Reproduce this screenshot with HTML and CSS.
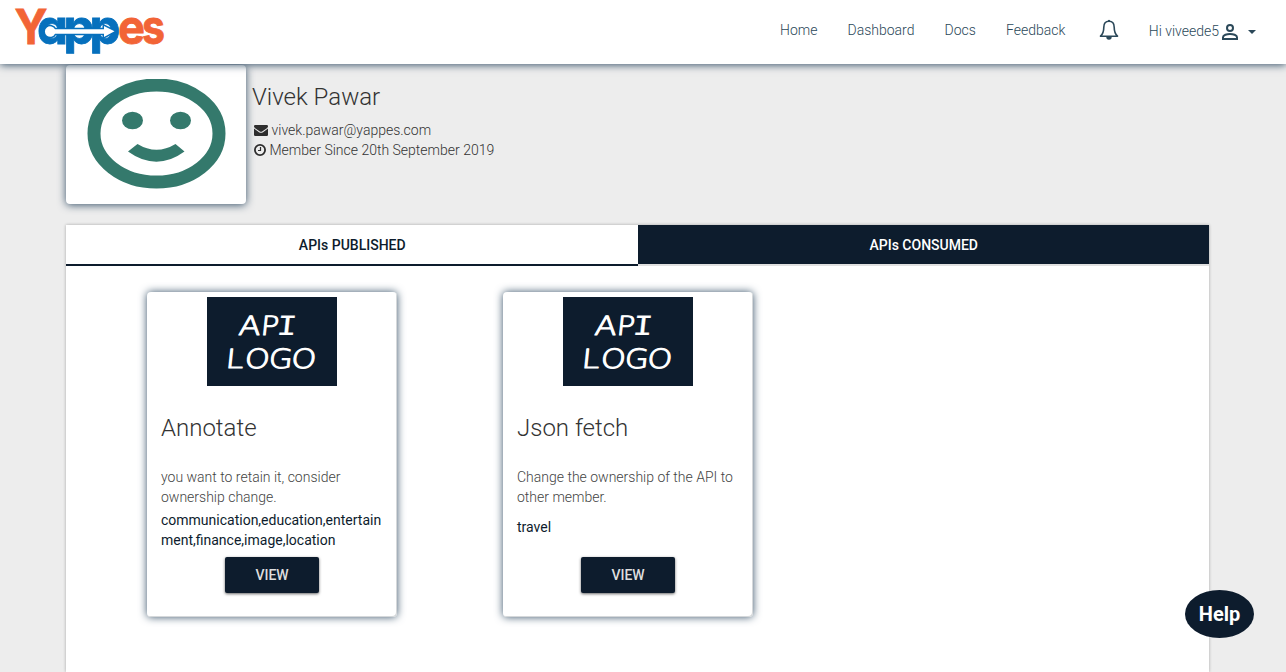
FILE: index.html
```html
<!DOCTYPE html>
<html lang="en">
<head>
<meta charset="utf-8">
<title>Yappes</title>
<link rel="stylesheet" href="styles.css">
</head>
<body>
<header class="navbar">
  <svg class="logo" viewBox="0 0 170 60" width="170" height="60" role="img" aria-label="Yappes">
    <g class="logo-orange">
      <text x="14.500" y="43.700" textLength="33" lengthAdjust="spacingAndGlyphs">Y</text>
      <text x="118" y="43.700" textLength="27" lengthAdjust="spacingAndGlyphs">e</text>
      <text x="142" y="43.700" textLength="23" lengthAdjust="spacingAndGlyphs">s</text>
    </g>
    <g class="logo-blue">
      <text x="37" y="43.700" textLength="31" lengthAdjust="spacingAndGlyphs">a</text>
      <text x="63.500" y="43.700" textLength="31" lengthAdjust="spacingAndGlyphs">p</text>
      <text x="89.500" y="43.700" textLength="31" lengthAdjust="spacingAndGlyphs">p</text>
    </g>
    <path class="logo-arrow" d="M55 29.300H104V26L114.500 31.300L104 37V33.800H55A5.300 5.300 0 1 1 55 29.300Z"/>
  </svg>
  <nav class="nav">
    <a class="nav-link">Home</a>
    <a class="nav-link">Dashboard</a>
    <a class="nav-link">Docs</a>
    <a class="nav-link">Feedback</a>
    <svg class="bell" viewBox="0 0 20 22" width="20" height="22">
      <path class="line" d="M10 2.200C6.500 2.200 4.800 4.800 4.800 8.200C4.800 12.500 4.300 14.700 1.500 17.200H18.500C15.700 14.700 15.200 12.500 15.200 8.200C15.200 4.800 13.500 2.200 10 2.200Z"/>
      <path class="solid" d="M8.700 2.200a1.300 1.500 0 0 1 2.600 0ZM7.300 18h5.400a2.700 2.700 0 0 1-5.400 0Z"/>
    </svg>
    <a class="user">Hi viveede5
      <svg class="person" viewBox="0 0 16 16" width="16" height="16"><circle class="heavy" cx="8" cy="4" r="3"/><path class="heavy" d="M1 15V13.200C1 11 5 9.900 8 9.900S15 11 15 13.200V15Z"/></svg>
      <svg class="caret" viewBox="0 0 8 4" width="8" height="4"><path class="solid" d="M0 0H8L4 4Z"/></svg>
    </a>
  </nav>
</header>
<main class="page">
  <section class="profile">
    <div class="avatar">
      <svg viewBox="0 0 140 110" width="140" height="110">
        <ellipse class="face" cx="70.500" cy="54.500" rx="62.500" ry="48.500"/>
        <ellipse class="feature" cx="46.500" cy="41.500" rx="10.500" ry="8.700"/>
        <ellipse class="feature" cx="94.500" cy="41.500" rx="10.500" ry="8.700"/>
        <path class="feature" d="M51.500 65Q70.500 76.500 89.500 65L98.500 72.500Q70.500 93 42 72.500Z"/>
      </svg>
    </div>
    <div class="about">
      <h1 class="title">Vivek Pawar</h1>
      <p class="fact"><svg viewBox="0 0 14 11" width="14" height="11"><path d="M1.200 0H12.800A1.200 1.200 0 0 1 14 1.300C14 2.300 13.200 3 12.500 3.500L8.500 6.300Q7 7.300 5.500 6.300L1.500 3.500C.8 3 0 2.300 0 1.300A1.200 1.200 0 0 1 1.200 0ZM0 3.500L5 7.200Q7 8.500 9 7.200L14 3.500V9.800A1.200 1.200 0 0 1 12.800 11H1.200A1.200 1.200 0 0 1 0 9.800Z"/></svg><span>vivek.pawar@yappes.com</span></p>
      <p class="fact"><svg viewBox="0 0 12 12" width="12" height="12"><circle class="clock" cx="6" cy="6" r="5.100"/><path class="hand" d="M6.500 3V6.500H4"/></svg><span>Member Since 20th September 2019</span></p>
    </div>
  </section>
  <section class="panel">
    <div class="tabs">
      <div class="tab tab-active">APIs PUBLISHED</div>
      <div class="tab">APIs CONSUMED</div>
    </div>
    <div class="cards">
      <article class="card">
        <svg class="api-logo" viewBox="0 0 130 89" width="130" height="89">
          <g transform="translate(0 38) skewX(-6)"><text x="31" textLength="22" lengthAdjust="spacingAndGlyphs">A</text><text x="53" textLength="18" lengthAdjust="spacingAndGlyphs">P</text><text class="serif-i" x="69" textLength="20" lengthAdjust="spacingAndGlyphs">I</text></g>
          <g transform="translate(0 71) skewX(-6)"><text x="18" textLength="18" lengthAdjust="spacingAndGlyphs">L</text><text x="37" textLength="25" lengthAdjust="spacingAndGlyphs">O</text><text x="61" textLength="24" lengthAdjust="spacingAndGlyphs">G</text><text x="83.500" textLength="25" lengthAdjust="spacingAndGlyphs">O</text></g>
        </svg>
        <h2 class="title">Annotate</h2>
        <p class="desc">you want to retain it, consider ownership change.</p>
        <div class="tags"><span>communication,education,entertainment,finance,image,location</span></div>
        <button class="view">VIEW</button>
      </article>
      <article class="card">
        <svg class="api-logo" viewBox="0 0 130 89" width="130" height="89">
          <g transform="translate(0 38) skewX(-6)"><text x="31" textLength="22" lengthAdjust="spacingAndGlyphs">A</text><text x="53" textLength="18" lengthAdjust="spacingAndGlyphs">P</text><text class="serif-i" x="69" textLength="20" lengthAdjust="spacingAndGlyphs">I</text></g>
          <g transform="translate(0 71) skewX(-6)"><text x="18" textLength="18" lengthAdjust="spacingAndGlyphs">L</text><text x="37" textLength="25" lengthAdjust="spacingAndGlyphs">O</text><text x="61" textLength="24" lengthAdjust="spacingAndGlyphs">G</text><text x="83.500" textLength="25" lengthAdjust="spacingAndGlyphs">O</text></g>
        </svg>
        <h2 class="title">Json fetch</h2>
        <p class="desc">Change the ownership of the API to other member.</p>
        <div class="tags tags-single"><span>travel</span></div>
        <button class="view">VIEW</button>
      </article>
    </div>
  </section>
</main>
<button class="help">Help</button>
</body>
</html>
```
FILE: styles.css
```css
* { box-sizing: border-box; }
body {
  display: flex;
  flex-direction: column;
  margin: 0;
  height: 100vh;
  background: #ededed;
  font: 300 14px/20px Roboto, sans-serif;
  color: #333;
}
h1, h2, p { margin: 0; }
.navbar {
  position: relative;
  z-index: 2;
  display: flex;
  flex: none;
  justify-content: space-between;
  height: 64px;
  background: #fff;
  box-shadow: 0 1px 8px #39536a;
  color: #2b4859;
}
.logo text { font: 700 47.5px Inter, sans-serif; font-feature-settings: "cv11"; }
.logo-orange { fill: #f26436; stroke: #f26436; stroke-width: .8; }
.logo-blue { fill: #0670bd; stroke: #0670bd; stroke-width: .8; }
.logo-arrow { fill: #fff; stroke: #0670bd; stroke-width: 3; paint-order: stroke; }
.nav { display: flex; align-items: flex-start; padding: 20px 30px 0 0; }
.nav-link { margin-right: 30.1px; }
.bell { margin: -1px 30px 0 3.3px; }
.line { fill: none; stroke: #2b4859; stroke-width: 1.6; stroke-linejoin: round; }
.heavy { fill: none; stroke: #2b4859; stroke-width: 2; }
.solid { fill: #2b4859; }
.user { display: flex; align-items: center; gap: 4px; padding-top: 1px; }
.person { margin: 1px 1px 0 -1px; }
.caret { margin: 1px 0 0 5px; }
.page { display: flex; flex: 1; flex-direction: column; min-height: 0; width: 1143px; margin-left: 66px; }
.profile { display: flex; flex: none; gap: 6px; height: 161px; }
.avatar {
  width: 180px;
  height: 139px;
  margin-top: 1px;
  padding: 14px 20px 0;
  border-radius: 4px;
  background: #fff;
  box-shadow: 0 1px 8px #39536a;
}
.face { fill: none; stroke: #34796c; stroke-width: 13; }
.feature { fill: #34796c; }
.title { font-size: 24px; font-weight: 300; line-height: 32px; }
.about { padding-top: 17px; }
.about .title { margin-bottom: 7px; }
.fact { display: flex; align-items: center; gap: 3.5px; padding-left: 2px; }
.fact svg { fill: #2e2e2e; }
.fact .clock, .fact .hand { fill: none; stroke: #2e2e2e; stroke-width: 1.8; }
.fact .hand { stroke-width: 1.2; }
.panel { flex: 1; min-height: 0; background: #fff; box-shadow: 0 0 3px rgba(0,0,0,.3); }
.tabs { display: flex; height: 41px; }
.tab {
  flex: 1;
  padding: 1px 0 0 1px;
  border-bottom: 2px solid #e0e0e0;
  background: #0d1c2d;
  color: #fff;
  font-weight: 500;
  line-height: 38px;
  text-align: center;
}
.tab-active { border-color: #0d1c2d; background: #fff; color: #0d1c2d; }
.cards { display: flex; gap: 106px; padding: 26px 0 0 81px; }
.card {
  display: flex;
  flex-direction: column;
  align-items: center;
  width: 250px;
  height: 325px;
  padding: 5px 14px 0;
  border-radius: 4px;
  box-shadow: inset -1px -1px 0 #d5d8da, 0 0 8px #39536a;
}
.api-logo { background: #0d1c2d; }
.api-logo text { font: 200 26.5px "DejaVu Sans", sans-serif; fill: #fff; stroke: #fff; stroke-width: 1.1; stroke-linejoin: round; }
.api-logo .serif-i { font-family: "DejaVu Sans Mono", monospace; font-weight: 400; stroke-width: .2; }
.card .title { width: 100%; margin-top: 26px; }
.desc { width: 100%; margin-top: 23px; color: #444; }
.tags {
  display: flex;
  align-items: center;
  width: 100%;
  height: 40px;
  margin: 3px 0 7px;
  color: #0d1c2d;
  font-weight: 400;
  overflow-wrap: anywhere;
}
.tags-single { padding-bottom: 6px; }
.view {
  width: 94px;
  height: 36px;
  padding: 0;
  border: 0;
  border-radius: 2px;
  background: #0d1c2d;
  color: #dedede;
  font: 500 14px/36px Roboto, sans-serif;
  box-shadow: 0 1px 3px rgba(0,0,0,.6);
}
.help {
  position: fixed;
  z-index: 3;
  left: 1185px;
  top: 590px;
  width: 69px;
  height: 48px;
  padding: 0;
  border: 0;
  border-radius: 50%;
  background: #0d1c2d;
  color: #fff;
  font: 700 20px/48px Roboto, sans-serif;
}
```
